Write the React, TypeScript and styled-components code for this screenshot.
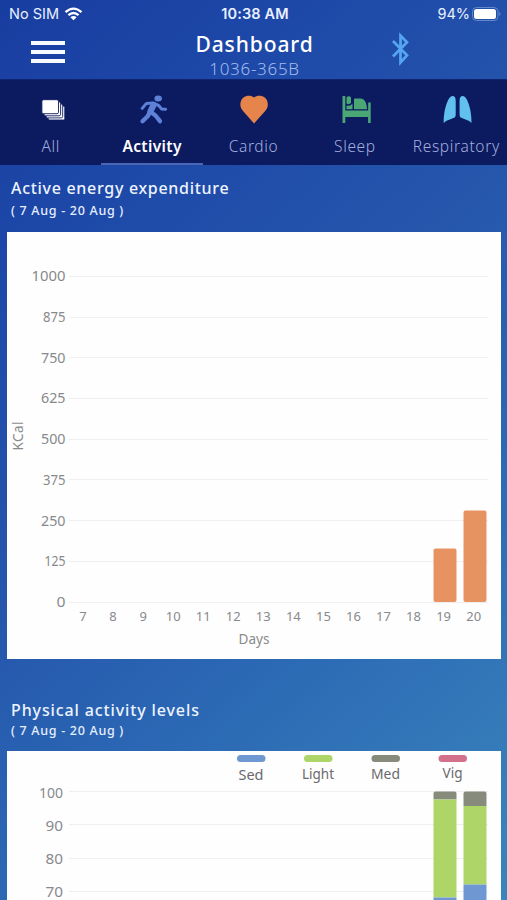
import React from "react";
import styled, { createGlobalStyle } from "styled-components";

const GlobalStyle = createGlobalStyle`
  * { box-sizing: border-box; }
  html, body { margin: 0; padding: 0; }
  body { font-family: "Noto Sans", "Open Sans", sans-serif; overflow: hidden; }
`;

const Screen = styled.div`
  width: 507px;
  height: 900px;
  overflow: hidden;
  display: flex;
  flex-direction: column;
  background: linear-gradient(138deg, #183da0 0%, #1d48a8 20%, #2556ac 45%, #2c6ab5 68%, #3a85bb 100%);
`;

const StatusBar = styled.div`
  height: 28px;
  padding: 0 6px 0 9px;
  display: grid;
  grid-template-columns: 1fr auto 1fr;
  align-items: center;
  color: #e9f0ff;
  font: 400 14.5px/28px Inter, sans-serif;
`;

const StatusGroup = styled.div<{ $end?: boolean }>`
  display: flex;
  align-items: center;
  gap: ${(p) => (p.$end ? 2 : 5)}px;
  justify-content: ${(p) => (p.$end ? "flex-end" : "flex-start")};
`;

const Clock = styled.span`
  font-weight: 600;
  letter-spacing: 0.15px;
`;

const Header = styled.header`
  height: 51px;
  padding: 0 96px 0 31px;
  display: grid;
  grid-template-columns: 34px 1fr 20px;
  color: #fff;
`;

const MenuButton = styled.button`
  height: 22px;
  margin-top: 13px;
  padding: 0;
  border: 0;
  background: none;
  display: flex;
  flex-direction: column;
  justify-content: space-between;
`;

const MenuLine = styled.span`
  width: 34px;
  height: 4px;
  background: #f7fbff;
`;

const Titles = styled.div`
  text-align: center;
  padding-left: 53px;
`;

const Title = styled.h1`
  margin: 2px 0 0;
  font-size: 21px;
  line-height: 28px;
  font-weight: 500;
  letter-spacing: 0.9px;
`;

const Subtitle = styled.div`
  margin-top: 1px;
  font-size: 17px;
  line-height: 20px;
  font-weight: 300;
  letter-spacing: 0.7px;
  color: #a3bbed;
`;

const BluetoothIcon = styled.svg`
  margin-top: 3px;
`;

const Nav = styled.nav`
  height: 86px;
  flex-shrink: 0;
  display: grid;
  grid-template-columns: repeat(5, 1fr);
  background: #0c1a60;
  border-top: 1px solid #10246f;
`;

const Tab = styled.a<{ $active?: boolean }>`
  display: flex;
  flex-direction: column;
  align-items: center;
  padding-top: 15px;
  border-bottom: 2px solid ${(p) => (p.$active ? "#4a67b6" : "transparent")};
  color: ${(p) => (p.$active ? "#ffffff" : "#a3aede")};
  font-weight: ${(p) => (p.$active ? 600 : 300)};
  font-size: 15.5px;
  line-height: 22px;
  letter-spacing: ${(p) => (p.$active ? 0.35 : 0.65)}px;
  white-space: nowrap;
`;

const TabIcon = styled.svg`
  width: 32px;
  height: 30px;
  margin-bottom: 10px;
`;

const Section = styled.section<{ $first?: boolean }>`
  flex-shrink: 0;
  padding: ${(p) => (p.$first ? 11 : 39)}px 6px 0 7px;
`;

const SectionTitle = styled.h2<{ $tracking: number }>`
  margin: 0;
  padding-left: 4px;
  color: #eef4ff;
  font-size: 16px;
  line-height: 24px;
  font-weight: 500;
  letter-spacing: ${(p) => p.$tracking}px;
`;

const DateRange = styled.div<{ $lineHeight: number; $gap: number }>`
  padding-left: 4px;
  margin-bottom: ${(p) => p.$gap}px;
  color: #e6efff;
  font-size: 12.5px;
  line-height: ${(p) => p.$lineHeight}px;
  font-weight: 500;
  letter-spacing: 0.7px;
`;

const Card = styled.div`
  background: #fefefe;
`;

const Chart = styled.svg`
  display: block;
  font-family: "Noto Sans", sans-serif;
  font-size: 13.5px;
  fill: #88898c;
`;

const GRID = "#efeff0";

const tabs = [
  {
    label: "All",
    icon: (
      <g fill="#fff" stroke="#0c1a60" strokeWidth="0.9">
        <rect x="13.2" y="11" width="16.6" height="14" rx="1.5" />
        <rect x="11.1" y="8.9" width="16.6" height="14" rx="1.5" />
        <rect x="9" y="6.8" width="16.6" height="14" rx="1.5" />
        <rect x="6.9" y="4.7" width="16.6" height="14" rx="1.5" />
      </g>
    ),
  },
  {
    label: "Activity",
    icon: (
      <g stroke="#5e81d8" fill="none" strokeLinecap="round" strokeLinejoin="round">
        <ellipse cx="22.2" cy="3.4" rx="3.8" ry="3" fill="#5e81d8" stroke="none" />
        <path d="M17.6 9.8 14.6 16" strokeWidth="6.2" />
        <path d="M16.2 8 10.4 8.4 6.2 13.4M19.2 9l3.3 1.3L25.5 13.9 29.6 14.2" strokeWidth="3" />
        <path d="M14 16.5 11.9 21 6.5 26.2M15 17.2l4.5 3.3L24 26.2" strokeWidth="4.3" />
      </g>
    ),
  },
  {
    label: "Cardio",
    icon: <path fill="#e5844b" d="M17 28.600 5.800 15.800C2.300 11.700 2.700 5.700 6.200 2.700 9.700-.1 14.300.3 17 2.500 19.700.3 24.500-.1 28 2.700c3.500 3 3.900 9 .4 13.100Z" />,
  },
  {
    label: "Sleep",
    icon: (
      <g fill="#4aa775">
        <path d="M3.500 1h2.800v14.500h22.900V7.500h2.500V28h-2.600v-6H6.300v6H3.500Z" />
        <path d="M7.500 2.500q2.500-2.500 4.500 0v5.500q-2 2-4.500.5Z" />
        <path d="M7.500 10.500q4 1 6-2v5.800h-6Z" />
        <path d="M15 14.300V4.500q0-1 1-1h5.500c4 0 6.200 4.500 6.500 10.800Z" />
      </g>
    ),
  },
  {
    label: "Respiratory",
    icon: (
      <g fill="#61c0ed">
        <path d="M12.500 1c2.300 0 3.200 1.500 3.200 5v13.500c0 2-.5 2.800-2.200 3.600-3.200 1.400-6.800 2-9.700 4.900C3.300 17 7.500 1 12.500 1Z" />
        <path d="M22.800 1c-2.300 0-3.200 1.500-3.200 5v13.500c0 2 .5 2.800 2.200 3.600 3.200 1.400 6.800 2 9.700 4.900C32 17 27.800 1 22.800 1Z" />
      </g>
    ),
  },
];

const kcal = [1000, 875, 750, 625, 500, 375, 250, 125, 0];
const days = [7, 8, 9, 10, 11, 12, 13, 14, 15, 16, 17, 18, 19, 20];
const levels = [100, 90, 80, 70];
const legend = [
  { label: "Sed", color: "#6f97d1", x: 244, y: 29, width: 25 },
  { label: "Light", color: "#add568", x: 311, y: 28, width: 32 },
  { label: "Med", color: "#878b7b", x: 378.5, y: 28, width: 29 },
  { label: "Vig", color: "#d3718d", x: 445.5, y: 27, width: 20 },
];
const stacks = [
  { x: 426.5, lightTop: 48.5, sedTop: 146.5 },
  { x: 456.5, lightTop: 55, sedTop: 133.5 },
];

const kcalWidth = (v: number) => {
  if (v === 1000) return 34;
  if (v === 125) return 21;
  if (v === 875 || v === 375) return 22.5;
  return v === 0 ? 9 : 24.5;
};

const EnergyChart = () => (
  <Chart width="494" height="427">
    {kcal.map((v, i) => {
      const y = 44.3 + i * 40.72;
      return (
        <g key={v}>
          <path d={`M62 ${Math.floor(y)}.5H481`} stroke={GRID} />
          <text
            x="58.5"
            y={y + 5}
            textAnchor="end"
            textLength={kcalWidth(v)}
            lengthAdjust="spacingAndGlyphs"
          >
            {v}
          </text>
        </g>
      );
    })}
    {days.map((d, i) => (
      <text key={d} x={76 + i * 30.05} y="389" textAnchor="middle" fontSize="13">{d}</text>
    ))}
    <rect x="426.5" y="316.5" width="23" height="53.5" rx="2" fill="#e79361" />
    <rect x="456.5" y="278.5" width="23" height="91.5" rx="2" fill="#e79361" />
    <text x="247" y="412" textAnchor="middle" textLength="31">Days</text>
    <text transform="translate(15.5 204) rotate(-90)" textAnchor="middle" textLength="29">KCal</text>
  </Chart>
);

const LevelsChart = () => (
  <Chart width="494" height="160">
    {levels.map((v, i) => (
      <g key={v}>
        <path d={`M62 ${40.5 + Math.round(i * 33.4)}H481`} stroke={GRID} />
        <text
          x="56"
          y={46.5 + i * 33.3}
          textAnchor="end"
          textLength={v === 100 ? 24 : 17.5}
          lengthAdjust="spacingAndGlyphs"
        >
          {v}
        </text>
      </g>
    ))}
    {legend.map((l) => (
      <g key={l.label}>
        <rect x={l.x - 14} y="4" width="28.5" height="7" rx="3.5" fill={l.color} />
        <text x={l.x} y={l.y} textAnchor="middle" textLength={l.width} lengthAdjust="spacingAndGlyphs" fill="#69696c">{l.label}</text>
      </g>
    ))}
    {stacks.map((s) => (
      <g key={s.x}>
        <path d={`M${s.x} ${s.lightTop}V42.5q0-2 2-2h19q2 0 2 2V${s.lightTop}Z`} fill="#878b7b" />
        <rect x={s.x} y={s.lightTop} width="23" height={s.sedTop - s.lightTop} fill="#add568" />
        <rect x={s.x} y={s.sedTop} width="23" height={160 - s.sedTop} fill="#6f97d1" />
      </g>
    ))}
  </Chart>
);

export default function App() {
  return (
    <Screen>
      <GlobalStyle />
      <StatusBar>
        <StatusGroup>
          <span>No SIM</span>
          <svg width="19" height="14" viewBox="0 0 18 14" fill="none" stroke="#fff" strokeWidth="2.3">
            <path d="M1 5.200q8-7.200 16 0M3.900 8.200q5.100-4.500 10.200 0" />
            <path d="M9 13.300 5.900 10.300q3.100-2.400 6.200 0Z" fill="#fff" stroke="none" />
          </svg>
        </StatusGroup>
        <Clock>10:38 AM</Clock>
        <StatusGroup $end>
          <span>94%</span>
          <svg width="29" height="14" viewBox="0 0 29 14">
            <rect x=".5" y=".5" width="25.5" height="13" rx="4" fill="none" stroke="#6488cb" />
            <rect x="2" y="2" width="22" height="10" rx="2.5" fill="#fff" />
            <path d="M27.300 4.800q2.500 2.200 0 4.400Z" fill="#6488cb" />
          </svg>
        </StatusGroup>
      </StatusBar>
      <Header>
        <MenuButton aria-label="Menu">
          <MenuLine /><MenuLine /><MenuLine />
        </MenuButton>
        <Titles>
          <Title>Dashboard</Title>
          <Subtitle>1036-365B</Subtitle>
        </Titles>
        <BluetoothIcon width="20" height="36" viewBox="0 0 20 36" fill="none" stroke="#55a5f3" strokeWidth="2.7">
          <path d="M2 10 16 24.300 9.500 31.500V4.500L16 11.300 2 25.500" />
        </BluetoothIcon>
      </Header>
      <Nav>
        {tabs.map((t) => (
          <Tab key={t.label} $active={t.label === "Activity"}>
            <TabIcon viewBox="0 0 32 30">{t.icon}</TabIcon>
            {t.label}
          </Tab>
        ))}
      </Nav>
      <Section $first>
        <SectionTitle $tracking={0.7}>Active energy expenditure</SectionTitle>
        <DateRange $lineHeight={22} $gap={10}>( 7 Aug - 20 Aug )</DateRange>
        <Card><EnergyChart /></Card>
      </Section>
      <Section>
        <SectionTitle $tracking={0.88}>Physical activity levels</SectionTitle>
        <DateRange $lineHeight={17} $gap={12}>( 7 Aug - 20 Aug )</DateRange>
        <Card><LevelsChart /></Card>
      </Section>
    </Screen>
  );
}
